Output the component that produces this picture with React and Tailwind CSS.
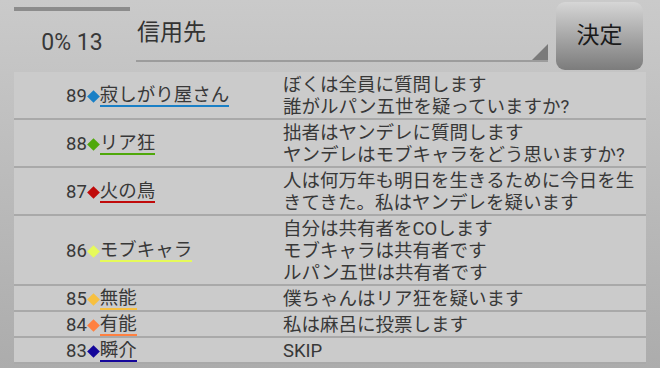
import React from "react";

const rows = [
  { no: 89, name: "寂しがり屋さん", color: "#1a80c6", lines: ["ぼくは全員に質問します", "誰がルパン五世を疑っていますか?"] },
  { no: 88, name: "リア狂", color: "#4fa80a", lines: ["拙者はヤンデレに質問します", "ヤンデレはモブキャラをどう思いますか?"] },
  { no: 87, name: "火の鳥", color: "#c00a0a", lines: ["人は何万年も明日を生きるために今日を生", "きてきた。私はヤンデレを疑います"] },
  { no: 86, name: "モブキャラ", color: "#e6fa5a", lines: ["自分は共有者をCOします", "モブキャラは共有者です", "ルパン五世は共有者です"] },
  { no: 85, name: "無能", color: "#f7c040", lines: ["僕ちゃんはリア狂を疑います"] },
  { no: 84, name: "有能", color: "#ff8040", lines: ["私は麻呂に投票します"] },
  { no: 83, name: "瞬介", color: "#14069a", lines: ["SKIP"] },
];

const font = { fontFamily: "Roboto, 'Noto Sans CJK JP', sans-serif" };

const Row = ({ row }) => (
  <div className="flex border-b-2 border-[#a9a9a9] pt-[2px]">
    <div className="w-[269px] flex items-center pl-[52px]">
      <span className="text-[18.5px] leading-[22px]">{row.no}</span>
      <span className="w-[13px] h-[13px] flex items-center justify-center">
        <span className="block w-[9px] h-[9px] rotate-45" style={{ backgroundColor: row.color }} />
      </span>
      <span
        className="text-[18.5px] leading-[20px] border-b-2"
        style={{ borderColor: row.color }}
      >
        {row.name}
      </span>
    </div>
    <div className="flex-1 text-[18.5px] leading-[22px]">
      {row.lines.map((l) => (
        <div key={l}>{l}</div>
      ))}
    </div>
  </div>
);

export default function App() {
  return (
    <div
      className="w-[660px] h-[368px] overflow-hidden bg-gradient-to-b from-[#cacaca] to-[#acacac] text-[#383838]"
      style={font}
    >
      <div className="h-[72px] flex">
        <div className="ml-[14px] w-[116px] pt-[7px] flex flex-col">
          <div className="h-[4px] bg-[#8c8c8c]" />
          <div className="flex-1 flex items-center justify-center text-[23px] pt-[3px]">0% 13</div>
        </div>
        <div className="ml-[6px] w-[412px] h-[62px] relative border-b-2 border-[#9c9c9c] flex items-center pt-[6px]">
          <span className="text-[23px] text-[#333] pl-[1px]">信用先</span>
          <span className="absolute right-0 bottom-0 w-0 h-0 border-l-[16px] border-l-transparent border-b-[16px] border-b-[#7a7a7a]" />
        </div>
        <div className="ml-[8px] mt-[2px] w-[87px] h-[68px] rounded-[9px] bg-gradient-to-b from-[#d6d6d6] to-[#7c7c7c] flex items-center justify-center text-[23px] text-[#1a1a1a]">
          決定
        </div>
      </div>
      <div className="ml-[14px] w-[632px] bg-[#cbcbcb]">
        {rows.map((r) => (
          <Row key={r.no} row={r} />
        ))}
      </div>
    </div>
  );
}
